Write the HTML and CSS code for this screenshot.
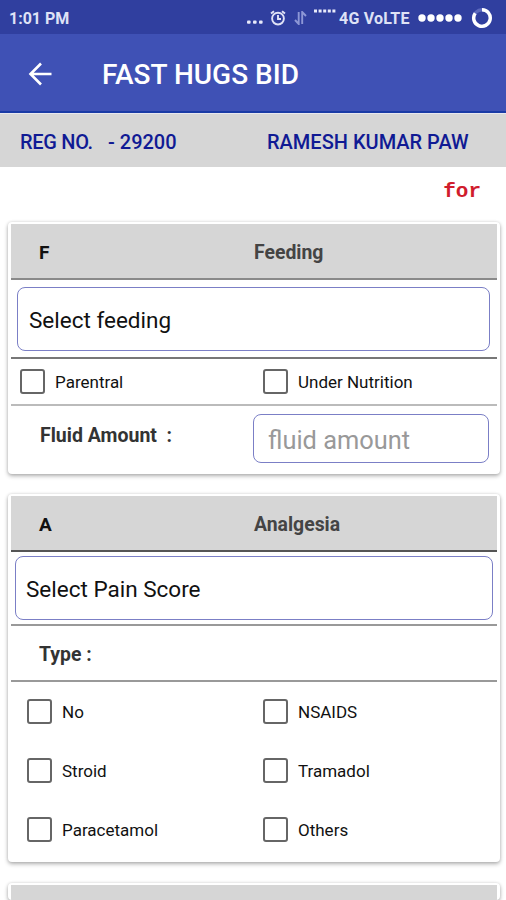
FILE: index.html
```html
<!DOCTYPE html>
<html lang="en">
<head>
    <meta charset="UTF-8">
    <meta name="viewport" content="width=device-width, initial-scale=1.0">
    <title>FAST HUGS BID</title>
    <link rel="stylesheet" href="styles.css">
</head>
<body>
    <div class="status-bar">
        <span class="time">1:01 PM</span>
        <svg class="status-dots" width="16" height="4" viewBox="0 0 16 4" fill="#e8eafa">
            <rect x="0" y="0.5" width="3.6" height="3.2" rx="1"/>
            <rect x="6" y="0.5" width="3.6" height="3.2" rx="1"/>
            <rect x="12" y="0.5" width="3.6" height="3.2" rx="1"/>
        </svg>
        <svg class="status-alarm" width="16" height="16" viewBox="0 0 16 16" fill="none" stroke="#dfe2f6" stroke-width="1.9">
            <circle cx="8" cy="8.6" r="5.9"/>
            <path d="M1 3.6L4 1.2M15 3.6L12 1.2M8 5v4h3"/>
        </svg>
        <svg class="status-data" width="13" height="14" viewBox="0 0 13 14" fill="none" stroke="#8d97d6" stroke-width="1.9">
            <path d="M4.7 1v12L1 9M8.2 13V1l3.8 4"/>
        </svg>
        <svg class="status-signal" width="22" height="4" viewBox="0 0 22 4" fill="#e8eafa">
            <rect x="0" y="0.5" width="3" height="3"/>
            <rect x="4.6" y="0.5" width="3" height="3"/>
            <rect x="9.2" y="0.5" width="3" height="3"/>
            <rect x="13.8" y="0.5" width="3" height="3"/>
            <rect x="18.4" y="0.5" width="3" height="3"/>
        </svg>
        <span class="network">4G VoLTE</span>
        <svg class="status-level" width="44" height="8" viewBox="0 0 44 8" fill="#fff">
            <circle cx="4" cy="4" r="3.7"/>
            <circle cx="13" cy="4" r="3.7"/>
            <circle cx="22" cy="4" r="3.7"/>
            <circle cx="31" cy="4" r="3.7"/>
            <circle cx="40" cy="4" r="3.7"/>
        </svg>
        <svg class="status-battery" width="22" height="22" viewBox="0 0 22 22" fill="none" stroke-width="3.4">
            <circle cx="11" cy="11" r="8.3" stroke="#5c69bd"/>
            <path d="M11 2.7A8.3 8.3 0 1 1 4.2 6.2" stroke="#fff"/>
        </svg>
    </div>

    <header class="app-bar">
        <svg class="back" width="24" height="24" viewBox="0 0 24 24" fill="none" stroke="#fff" stroke-width="2.6">
            <path d="M23.5 12H2.5M13 1.5L2.5 12 13 22.5"/>
        </svg>
        <h1>FAST HUGS BID</h1>
    </header>

    <div class="patient">
        <span class="reg-label">REG NO.</span>
        <span class="reg-no">- 29200</span>
        <span class="patient-name">RAMESH KUMAR PAW</span>
    </div>

    <div class="marquee">for</div>

    <main>
        <section class="card">
            <div class="card-header">
                <span class="letter">F</span>
                <h2>Feeding</h2>
            </div>
            <div class="select-row feeding">
                <button class="select">Select feeding</button>
            </div>
            <div class="nutrition">
                <label><input type="checkbox">Parentral</label>
                <label><input type="checkbox">Under Nutrition</label>
            </div>
            <div class="fluid">
                <label for="fluid">Fluid Amount &nbsp;:</label>
                <input type="text" id="fluid" placeholder="fluid amount">
            </div>
        </section>

        <section class="card">
            <div class="card-header dark">
                <span class="letter">A</span>
                <h2>Analgesia</h2>
            </div>
            <div class="select-row pain">
                <button class="select">Select Pain Score</button>
            </div>
            <div class="type">Type :</div>
            <div class="options">
                <label><input type="checkbox">No</label>
                <label><input type="checkbox">NSAIDS</label>
                <label><input type="checkbox">Stroid</label>
                <label><input type="checkbox">Tramadol</label>
                <label><input type="checkbox">Paracetamol</label>
                <label><input type="checkbox">Others</label>
            </div>
        </section>

        <section class="card next">
            <div class="card-header"></div>
        </section>
    </main>
</body>
</html>
```
FILE: styles.css
```css
* {
    box-sizing: border-box;
}
body {
    font-family: Roboto, sans-serif;
    margin: 0;
    display: flex;
    flex-direction: column;
    height: 100vh;
    overflow: hidden;
    background-color: #fff;
    color: #111;
}
h1, h2 {
    margin: 0;
}
.status-bar {
    display: flex;
    flex: none;
    align-items: center;
    height: 34px;
    padding: 2px 13px 0 9px;
    background-color: #303f9f;
    color: #dfe2f6;
    font-size: 16px;
    font-weight: bold;
}
.status-bar svg {
    flex: none;
}
.time {
    width: 238px;
}
.status-dots {
    margin-top: 7px;
}
.status-alarm {
    margin-left: 7px;
}
.status-data {
    margin-left: 8px;
}
.status-signal {
    margin: -15px 0 0 7px;
}
.network {
    width: 79px;
    margin-left: 3px;
    letter-spacing: 0.2px;
    white-space: nowrap;
}
.status-level {
    margin-top: -1px;
}
.status-battery {
    margin: -1px 0 0 auto;
}
.app-bar {
    display: flex;
    flex: none;
    align-items: center;
    height: 79px;
    padding: 2px 0 0 28px;
    background-color: #3f51b5;
    border-bottom: 2px solid #1a3ba6;
    color: #fff;
}
.app-bar h1 {
    margin: 2px 0 0 50px;
    font-size: 28px;
    font-weight: 500;
}
.patient {
    display: flex;
    flex: none;
    align-items: center;
    height: 54px;
    padding: 2px 0 0 20px;
    background-color: #d6d6d6;
    border-top: 1px solid #e8e8ee;
    color: #101a94;
    font-size: 20px;
    font-weight: 500;
    white-space: nowrap;
}
.reg-label {
    width: 88px;
    letter-spacing: -0.3px;
}
.reg-no {
    width: 159px;
}
.marquee {
    flex: none;
    height: 55px;
    padding: 13px 25px 0 0;
    font-family: "Liberation Mono", monospace;
    font-size: 21px;
    font-weight: bold;
    line-height: 24px;
    text-align: right;
    color: #d01c2c;
}
main {
    flex: 1;
    min-height: 0;
}
.card {
    margin: 0 6px 20px 8px;
    padding: 2px 3px 0;
    border-radius: 4px;
    background-color: #fff;
    box-shadow: 0 2px 4px rgba(0, 0, 0, 0.3), 0 0 3px rgba(0, 0, 0, 0.12);
}
.card.next {
    height: 17px;
    margin-top: 21px;
    margin-bottom: 0;
    overflow: hidden;
}
.card-header {
    display: flex;
    align-items: center;
    height: 56px;
    padding: 2px 0 0 28px;
    background-color: #d6d6d6;
    border-bottom: 2px solid #8a8a8a;
    font-size: 19px;
    font-weight: bold;
}
.card-header.dark {
    border-bottom-color: #555;
}
.letter {
    width: 215px;
}
.card-header h2 {
    color: #444;
    font-size: 19.4px;
    font-weight: bold;
}
.select-row {
    border-bottom: 2px solid #777;
}
.select-row.feeding {
    height: 79px;
    padding: 7px 7px 0 6px;
}
.select-row.pain {
    height: 74px;
    padding: 4px 4px 0;
    border-bottom-color: #999;
}
.select {
    display: block;
    width: 100%;
    height: 64px;
    padding: 1px 11px 0;
    border: 1.5px solid #7b7fc6;
    border-radius: 8px;
    background-color: #fff;
    color: #111;
    font-family: inherit;
    font-size: 22.5px;
    text-align: left;
}
.pain .select {
    padding-left: 10px;
}
input[type="checkbox"] {
    appearance: none;
    width: 25px;
    height: 25px;
    margin: 0 10px 0 0;
    border: 2px solid #666;
    border-radius: 3px;
}
.nutrition, .options {
    display: grid;
    align-items: center;
    font-size: 17px;
}
.nutrition label, .options label {
    display: flex;
    align-items: center;
    white-space: nowrap;
}
.nutrition {
    grid-template-columns: 243px 1fr;
    height: 47px;
    padding-left: 9px;
    border-bottom: 2px solid #bbb;
}
.fluid {
    display: flex;
    height: 68px;
    padding: 8px 8px 0 29px;
}
.fluid label {
    width: 213px;
    padding-top: 10px;
    color: #333;
    font-size: 19.5px;
    font-weight: bold;
}
.fluid input {
    flex: 1;
    min-width: 0;
    height: 49px;
    padding: 2px 14px 0;
    border: 1.5px solid #7b7fc6;
    border-radius: 8px;
    font-family: inherit;
    font-size: 25.4px;
}
.fluid input::placeholder {
    color: #999;
}
.type {
    height: 56px;
    padding: 17px 0 0 28px;
    border-bottom: 2px solid #999;
    color: #333;
    font-size: 19.4px;
    font-weight: bold;
}
.options {
    grid-template-columns: 236px 1fr;
    grid-auto-rows: 59px;
    padding-left: 16px;
    height: 180px;
}
```
